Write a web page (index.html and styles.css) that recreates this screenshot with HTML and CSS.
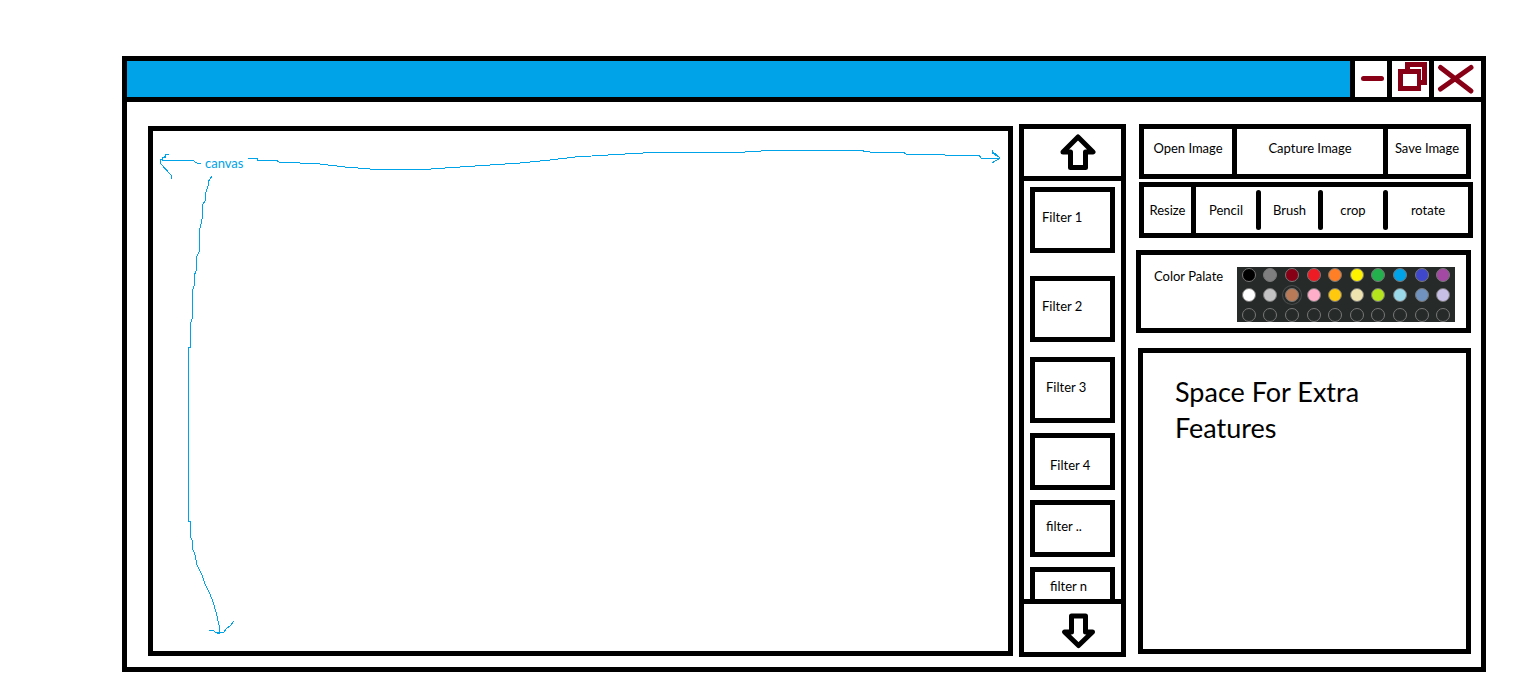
FILE: index.html
```html
<!DOCTYPE html>
<html lang="en">
<head>
<meta charset="utf-8">
<title>Image editor</title>
<link rel="stylesheet" href="styles.css">
</head>
<body>
<div class="window">
  <header class="titlebar">
    <div class="titlebar-fill"></div>
    <button class="win-btn win-min" aria-label="Minimize">
      <svg width="32" height="36" viewBox="0 0 32 36"><path d="M8.500 17.500H26.500" class="mark round"/></svg>
    </button>
    <button class="win-btn win-restore" aria-label="Restore">
      <svg width="37" height="36" viewBox="0 0 37 36"><path d="M15.500 3.500H32.500V21.500H15.500Z" class="mark"/><path d="M6 8H29V30H6Z" fill="#880015"/><path d="M11 13H25V25H11Z" fill="#fff"/><path d="M18 7.500H29.500V18" fill="none" stroke="#fff" stroke-width="1"/></svg>
    </button>
    <button class="win-btn win-close" aria-label="Close">
      <svg width="47" height="36" viewBox="0 0 47 36"><path d="M6.500 6.500L37 30M37 6.500L6.500 28" class="mark round"/></svg>
    </button>
  </header>

  <div class="workspace">
    <main class="canvas">
      <svg class="sketch" viewBox="153 131 855 520" role="img" aria-label="Canvas area">
        <path d="M201 163H197L192 160H162M169 154H165V157H162V159H160V163L171 175V179M162 159L165 156"/>
        <path d="M248 158H257V160H276L279 162L320 164L345 167L370 169H431L460 167L490 165L520 163L550 160L575 157L625 154L662 152H745L778 150H857L870 152H903L906 154H942L945 155H979L981 158H999M992 151L1000 158L992 163M992 150V153L999 157"/>
        <path d="M212 176L208 182V186L205 195V201L202 206V219L199 233V252L196 258V271L194 276V286L192 292V319L190 325V347H188V521H190V536L192 540V547L195 555L197 565L202 575L205 584L210 594L213 602L216 612L219 625L220 634M209 630H213L215 632H224L227 628L230 626L234 621M215 632L220 634"/>
        <text x="205" y="168">canvas</text>
      </svg>
    </main>

    <nav class="filters" aria-label="Filters">
      <button class="scroll scroll-up" aria-label="Scroll up">
        <svg width="36" height="36" viewBox="0 0 36 36"><path d="M18 3L33 18H25.500V33.500H10.500V18H3Z"/></svg>
      </button>
      <div class="filter-list">
        <button class="filter tall near high loose">Filter 1</button>
        <button class="filter tall near high">Filter 2</button>
        <button class="filter tall mid high snug">Filter 3</button>
        <button class="filter far low snug">Filter 4</button>
        <button class="filter mid high snug">filter ..</button>
        <button class="filter far cut">filter n</button>
      </div>
      <button class="scroll scroll-down" aria-label="Scroll down">
        <svg width="36" height="36" viewBox="0 0 36 36"><path d="M11.500 3H25.500V19H32.500L18.500 32.500L4.500 19H11.500Z"/></svg>
      </button>
    </nav>

    <aside class="panel">
      <div class="bar file-bar">
        <button>Open Image</button>
        <button>Capture Image</button>
        <button>Save Image</button>
      </div>
      <div class="bar tool-bar">
        <button class="walled">Resize</button>
        <button>Pencil</button>
        <i class="tick"></i>
        <button>Brush</button>
        <i class="tick"></i>
        <button>crop</button>
        <i class="tick"></i>
        <button>rotate</button>
      </div>
      <section class="palette">
        <span class="palette-label">Color Palate</span>
        <div class="swatches">
          <button class="c-black" aria-label="Black"></button>
          <button class="c-gray" aria-label="Gray"></button>
          <button class="c-maroon" aria-label="Dark red"></button>
          <button class="c-red" aria-label="Red"></button>
          <button class="c-orange" aria-label="Orange"></button>
          <button class="c-yellow" aria-label="Yellow"></button>
          <button class="c-green" aria-label="Green"></button>
          <button class="c-blue" aria-label="Turquoise"></button>
          <button class="c-indigo" aria-label="Indigo"></button>
          <button class="c-purple" aria-label="Purple"></button>
          <button class="c-white" aria-label="White"></button>
          <button class="c-silver" aria-label="Light gray"></button>
          <button class="c-brown" aria-label="Brown"></button>
          <button class="c-rose" aria-label="Rose"></button>
          <button class="c-gold" aria-label="Gold"></button>
          <button class="c-cream" aria-label="Light yellow"></button>
          <button class="c-lime" aria-label="Lime"></button>
          <button class="c-sky" aria-label="Light turquoise"></button>
          <button class="c-steel" aria-label="Blue gray"></button>
          <button class="c-lavender" aria-label="Lavender"></button>
          <button aria-label="Empty 1"></button>
          <button aria-label="Empty 2"></button>
          <button aria-label="Empty 3"></button>
          <button aria-label="Empty 4"></button>
          <button aria-label="Empty 5"></button>
          <button aria-label="Empty 6"></button>
          <button aria-label="Empty 7"></button>
          <button aria-label="Empty 8"></button>
          <button aria-label="Empty 9"></button>
          <button aria-label="Empty 10"></button>
        </div>
      </section>
      <section class="extra">
        <p>Space For Extra<br>Features</p>
      </section>
    </aside>
  </div>
</div>
</body>
</html>
```

FILE: styles.css
```css
* {
  box-sizing: border-box;
}

body {
  margin: 0;
  min-height: 100vh;
  display: flex;
  padding: 56px 50px 27px 122px;
  background: #fff;
  color: #000;
  font: 13px/18px Lato, "Open Sans", sans-serif;
}

button {
  margin: 0;
  padding: 0;
  border: 0;
  background: none;
  color: inherit;
  font: inherit;
  white-space: nowrap;
}

svg {
  display: block;
}

.window {
  flex: 1;
  display: flex;
  flex-direction: column;
  border: 5px solid #000;
}

.titlebar {
  display: flex;
  border-bottom: 5px solid #000;
}

.titlebar-fill {
  flex: 1;
  background: #00a2e8;
}

.win-btn {
  border-left: 5px solid #000;
}

.mark {
  fill: none;
  stroke: #880015;
  stroke-width: 5;
}

.round {
  stroke-linecap: round;
}

.workspace {
  flex: 1;
  display: grid;
  grid-template-columns: 1fr 107px 347px;
  padding: 22px 8px 10px 21px;
}

.canvas {
  margin: 2px 6px 1px 0;
  border: 5px solid #000;
}

.sketch {
  width: 100%;
  fill: none;
  stroke: #00a2e8;
  stroke-width: 1;
  shape-rendering: crispEdges;
}

.sketch text {
  fill: #00a2e8;
  stroke: none;
  font-size: 13px;
}

.filters {
  display: flex;
  flex-direction: column;
  border: 5px solid #000;
}

.scroll {
  display: flex;
  justify-content: center;
  padding-left: 10px;
}

.scroll path {
  fill: none;
  stroke: #000;
  stroke-width: 5;
  stroke-linejoin: round;
}

.scroll-up {
  padding-top: 5px;
  padding-bottom: 6px;
  border-bottom: 5px solid #000;
}

.scroll-down {
  padding-top: 9px;
  padding-bottom: 3px;
  border-top: 5px solid #000;
}

.filter-list {
  flex: 1;
  display: flex;
  flex-direction: column;
  padding: 6px 6px 0;
}

.filter {
  min-height: 57px;
  margin-bottom: 15px;
  border: 5px solid #000;
  text-align: left;
}

.tall {
  min-height: 66px;
}

.loose {
  margin-bottom: 23px;
}

.snug {
  margin-bottom: 10px;
}

.high {
  padding-bottom: 6px;
}

.low {
  padding-top: 6px;
}

.near {
  padding-left: 7px;
}

.mid {
  padding-left: 11px;
}

.far {
  padding-left: 15px;
}

.cut {
  flex: 1;
  min-height: 28px;
  margin-bottom: 0;
  border-bottom: 0;
}

.panel {
  display: flex;
  flex-direction: column;
  padding-left: 10px;
}

.bar {
  display: grid;
  margin-left: 3px;
  border: 5px solid #000;
}

.file-bar {
  grid-template-columns: 88fr 151fr 83fr;
  height: 55px;
  margin-right: 2px;
}

.file-bar button {
  padding-bottom: 8px;
}

.file-bar button + button {
  border-left: 5px solid #000;
}

.tool-bar {
  grid-template-columns: 52fr 60fr 5px 57fr 5px 60fr 5px 80fr;
  align-items: center;
  height: 56px;
  margin-top: 3px;
}

.walled {
  align-self: stretch;
  border-right: 5px solid #000;
}

.tick {
  height: 40px;
  border-radius: 3px;
  background: #000;
}

.palette {
  display: flex;
  align-items: flex-start;
  justify-content: space-between;
  height: 83px;
  margin: 12px 2px 15px 0;
  padding: 12px 11px 6px 13px;
  border: 5px solid #000;
}

.swatches {
  display: grid;
  grid-template-columns: repeat(10, 1fr);
  row-gap: 6px;
  width: 218px;
  height: 55px;
  padding: 1px 1px 0;
  justify-items: center;
  align-content: start;
  background: #262a29;
}

.swatches button {
  width: 14px;
  height: 14px;
  border: 1px solid #777;
  border-radius: 50%;
}

.swatches .c-black { background: #000; }
.swatches .c-gray { background: #7f7f7f; }
.swatches .c-maroon { background: #880015; }
.swatches .c-red { background: #ed1c24; }
.swatches .c-orange { background: #ff7f27; }
.swatches .c-yellow { background: #fff200; }
.swatches .c-green { background: #22b14c; }
.swatches .c-blue { background: #00a2e8; }
.swatches .c-indigo { background: #3f48cc; }
.swatches .c-purple { background: #a349a4; }
.swatches .c-white { background: #fff; }
.swatches .c-silver { background: #c3c3c3; }
.swatches .c-brown { background: #b97a57; box-shadow: 0 0 0 2px #262a29, 0 0 0 3px #484c4b; }
.swatches .c-rose { background: #ffaec9; }
.swatches .c-gold { background: #ffc90e; }
.swatches .c-cream { background: #efe4b0; }
.swatches .c-lime { background: #b5e61d; }
.swatches .c-sky { background: #99d9ea; }
.swatches .c-steel { background: #7092be; }
.swatches .c-lavender { background: #c8bfe7; }

.extra {
  flex: 1;
  margin: 0 2px 3px 2px;
  padding: 21px 32px;
  border: 5px solid #000;
}

.extra p {
  margin: 0;
  font-size: 27px;
  line-height: 36px;
}
```
